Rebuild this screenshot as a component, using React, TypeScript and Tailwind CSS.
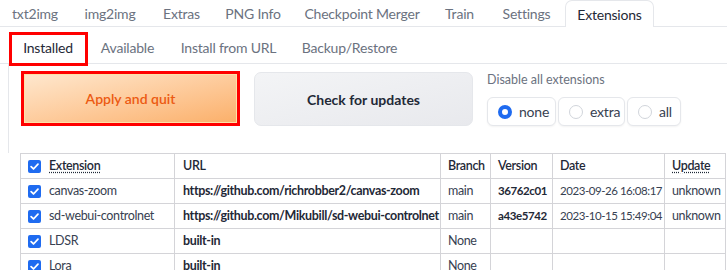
import React from "react";

const TOP_TABS = [
  { label: "txt2img", w: "w-[70px]" },
  { label: "img2img", w: "w-[80px]" },
  { label: "Extras", w: "w-[63px]" },
  { label: "PNG Info", w: "w-[80px]" },
  { label: "Checkpoint Merger", w: "w-[138px]" },
  { label: "Train", w: "w-[57px]" },
  { label: "Settings", w: "w-[77px]" },
];

const SUB_TABS = [
  { label: "Available", w: "w-[81px]" },
  { label: "Install from URL", w: "w-[121px]" },
  { label: "Backup/Restore", w: "w-[121px]" },
];

const ROWS = [
  {
    name: "canvas-zoom",
    url: "https://github.com/richrobber2/canvas-zoom",
    branch: "main",
    version: "36762c01",
    date: "2023-09-26 16:08:17",
    update: "unknown",
  },
  {
    name: "sd-webui-controlnet",
    url: "https://github.com/Mikubill/sd-webui-controlnet",
    branch: "main",
    version: "a43e5742",
    date: "2023-10-15 15:49:04",
    update: "unknown",
  },
  { name: "LDSR", url: "built-in", branch: "None", version: "", date: "", update: "" },
  { name: "Lora", url: "built-in", branch: "None", version: "", date: "", update: "" },
];

function Check() {
  return (
    <span className="inline-flex h-[13px] w-[13px] shrink-0 items-center justify-center rounded-[2px] bg-[#1f6bf0]">
      <svg viewBox="0 0 12 12" className="h-[11px] w-[11px]">
        <path d="M2.3 6.2 L4.9 8.7 L9.8 3.4" fill="none" stroke="white" strokeWidth="1.9" strokeLinecap="round" strokeLinejoin="round" />
      </svg>
    </span>
  );
}

function Radio({ label, checked, w }: { label: string; checked?: boolean; w: string }) {
  return (
    <div className={`flex h-[29px] ${w} items-center gap-[7px] rounded-[6px] border border-[#e5e7eb] bg-white pl-[10px] shadow-[0_1px_2px_rgba(0,0,0,0.05)]`}>
      {checked ? (
        <span className="h-[14px] w-[14px] rounded-full border-[4px] border-[#1f6bf0] bg-white" />
      ) : (
        <span className="h-[14px] w-[14px] rounded-full border border-[#d1d5db] bg-white" />
      )}
      <span className="text-[14px] tracking-[-0.2px] text-[#374151]">{label}</span>
    </div>
  );
}

const cell = "border border-[#d4d4d8] px-[7px] text-left whitespace-nowrap overflow-hidden";

export default function App() {
  return (
    <div className="h-[270px] w-[727px] overflow-hidden bg-white font-['Lato',sans-serif] text-[#374151]">
      {/* Top tabs */}
      <div className="flex h-[27px] border-b border-[#e5e7eb] tracking-[-0.2px]">
        {TOP_TABS.map((t) => (
          <div key={t.label} className={`${t.w} flex items-center justify-center text-[14px] text-[#6b7280]`}>
            {t.label}
          </div>
        ))}
        <div className="-mb-px flex h-[27px] w-[89px] items-center justify-center rounded-t-[7px] border border-b-0 border-[#e5e7eb] bg-white text-[14px] text-[#1f2937]">
          Extensions
        </div>
      </div>

      {/* Sub tabs */}
      <div className="flex h-[37px] items-end border-b border-[#e5e7eb] pl-[9px] tracking-[-0.2px]">
        <div className="relative flex h-[31px] w-[78px] items-center justify-center text-[14px] text-[#1f2937]">
          Installed
          <div className="absolute left-0 top-0 h-[34px] w-[79px] border-[3px] border-[#ff0000]" />
        </div>
        {SUB_TABS.map((t) => (
          <div key={t.label} className={`${t.w} flex h-[31px] items-center justify-center text-[14px] text-[#6b7280]`}>
            {t.label}
          </div>
        ))}
      </div>

      {/* Controls */}
      <div className="ml-[8px] flex h-[89px] gap-[14px] border-l border-[#e5e7eb] pl-[12px] pt-[7px]">
        <div className="h-[55px] w-[219px] border-[3px] border-[#ff0000]">
          <div className="flex h-full w-full items-center justify-center border border-[#fde2a8] bg-gradient-to-br from-[#fee7cd] to-[#fbb06a] text-[14px] font-semibold text-[#ec5a12]">
            Apply and quit
          </div>
        </div>
        <div className="mt-px flex h-[54px] w-[219px] items-center justify-center rounded-[7px] border border-[#e5e7eb] bg-gradient-to-br from-[#f3f4f6] to-[#e8e9ed] text-[14px] font-bold text-[#1f2937]">
          Check for updates
        </div>
        <div className="flex flex-col">
          <div className="mt-[1px] text-[12.5px] leading-[16px] text-[#6b7280]">Disable all extensions</div>
          <div className="mt-[9px] flex gap-[2px]">
            <Radio label="none" checked w="w-[69px]" />
            <Radio label="extra" w="w-[67px]" />
            <Radio label="all" w="w-[54px]" />
          </div>
        </div>
      </div>

      {/* Table */}
      <table className="ml-[20px] w-[705px] table-fixed border-collapse text-[12.5px] tracking-[-0.35px]">
        <colgroup>
          <col className="w-[154px]" />
          <col className="w-[266px]" />
          <col className="w-[50px]" />
          <col className="w-[62px]" />
          <col className="w-[112px]" />
          <col className="w-[61px]" />
        </colgroup>
        <thead>
          <tr className="h-[25px] text-[#1f2937]">
            <th className={`${cell} font-normal`}>
              <div className="flex items-center gap-[8px]">
                <Check />
                <span className="font-semibold underline decoration-dotted underline-offset-2">Extension</span>
              </div>
            </th>
            <th className={`${cell} px-[8px] font-semibold`}>URL</th>
            <th className={`${cell} font-semibold`}>Branch</th>
            <th className={`${cell} px-[6px] font-semibold`}>Version</th>
            <th className={`${cell} font-semibold`}>Date</th>
            <th className={`${cell} font-semibold`}>
              <span className="underline decoration-dotted underline-offset-2">Update</span>
            </th>
          </tr>
        </thead>
        <tbody>
          {ROWS.map((r) => (
            <tr key={r.name} className="h-[25px]">
              <td className={cell}>
                <div className="flex items-center gap-[8px]">
                  <Check />
                  <span>{r.name}</span>
                </div>
              </td>
              <td className={`${cell} px-[8px] font-bold text-[#1f2937]`}>{r.url}</td>
              <td className={cell}>{r.branch}</td>
              <td className={`${cell} px-[6px] text-[11.5px] tracking-[-0.4px] font-bold text-[#1f2937]`}>{r.version}</td>
              <td className={`${cell} text-[11.5px] tracking-[-0.45px]`}>{r.date}</td>
              <td className={cell}>{r.update}</td>
            </tr>
          ))}
        </tbody>
      </table>
    </div>
  );
}
